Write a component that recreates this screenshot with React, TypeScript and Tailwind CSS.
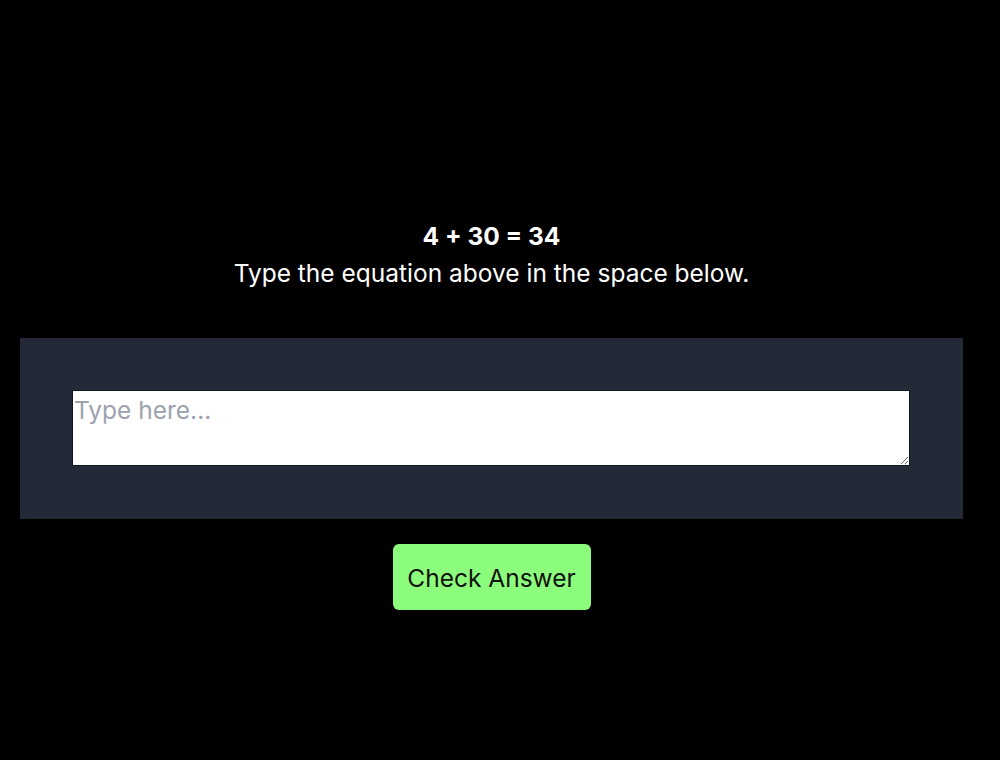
export default function App() {
  return (
    <div className="min-h-[760px] w-[1000px] bg-black" style={{ fontFamily: "Inter, 'Noto Sans', sans-serif" }}>
      <div className="ml-[20px] w-[943px] pt-[220px] flex flex-col items-center">
        <div className="text-white text-[24.5px] font-bold leading-[32px]">4 + 30 = 34</div>
        <div className="text-white text-[24.5px] leading-[32px] mt-[5px]">Type the equation above in the space below.</div>
        <div className="mt-[49px] w-full bg-[#232936] pl-[52px] pr-[53px] pt-[52px] pb-[53px]">
          <textarea
            placeholder="Type here..."
            className="block w-full h-[76px] bg-white border border-[#11151d] px-[1px] pt-[4px] pb-[2px] text-[24.5px] leading-[30px] text-black placeholder:text-[#9ca3af] outline-none"
          />
        </div>
        <button className="mt-[25px] w-[198px] h-[66px] rounded-[6px] bg-[#8cfc7c] text-[#111] text-[24.5px] leading-[30px]">
          <span className="relative top-[1px]">Check Answer</span>
        </button>
      </div>
    </div>
  );
}
